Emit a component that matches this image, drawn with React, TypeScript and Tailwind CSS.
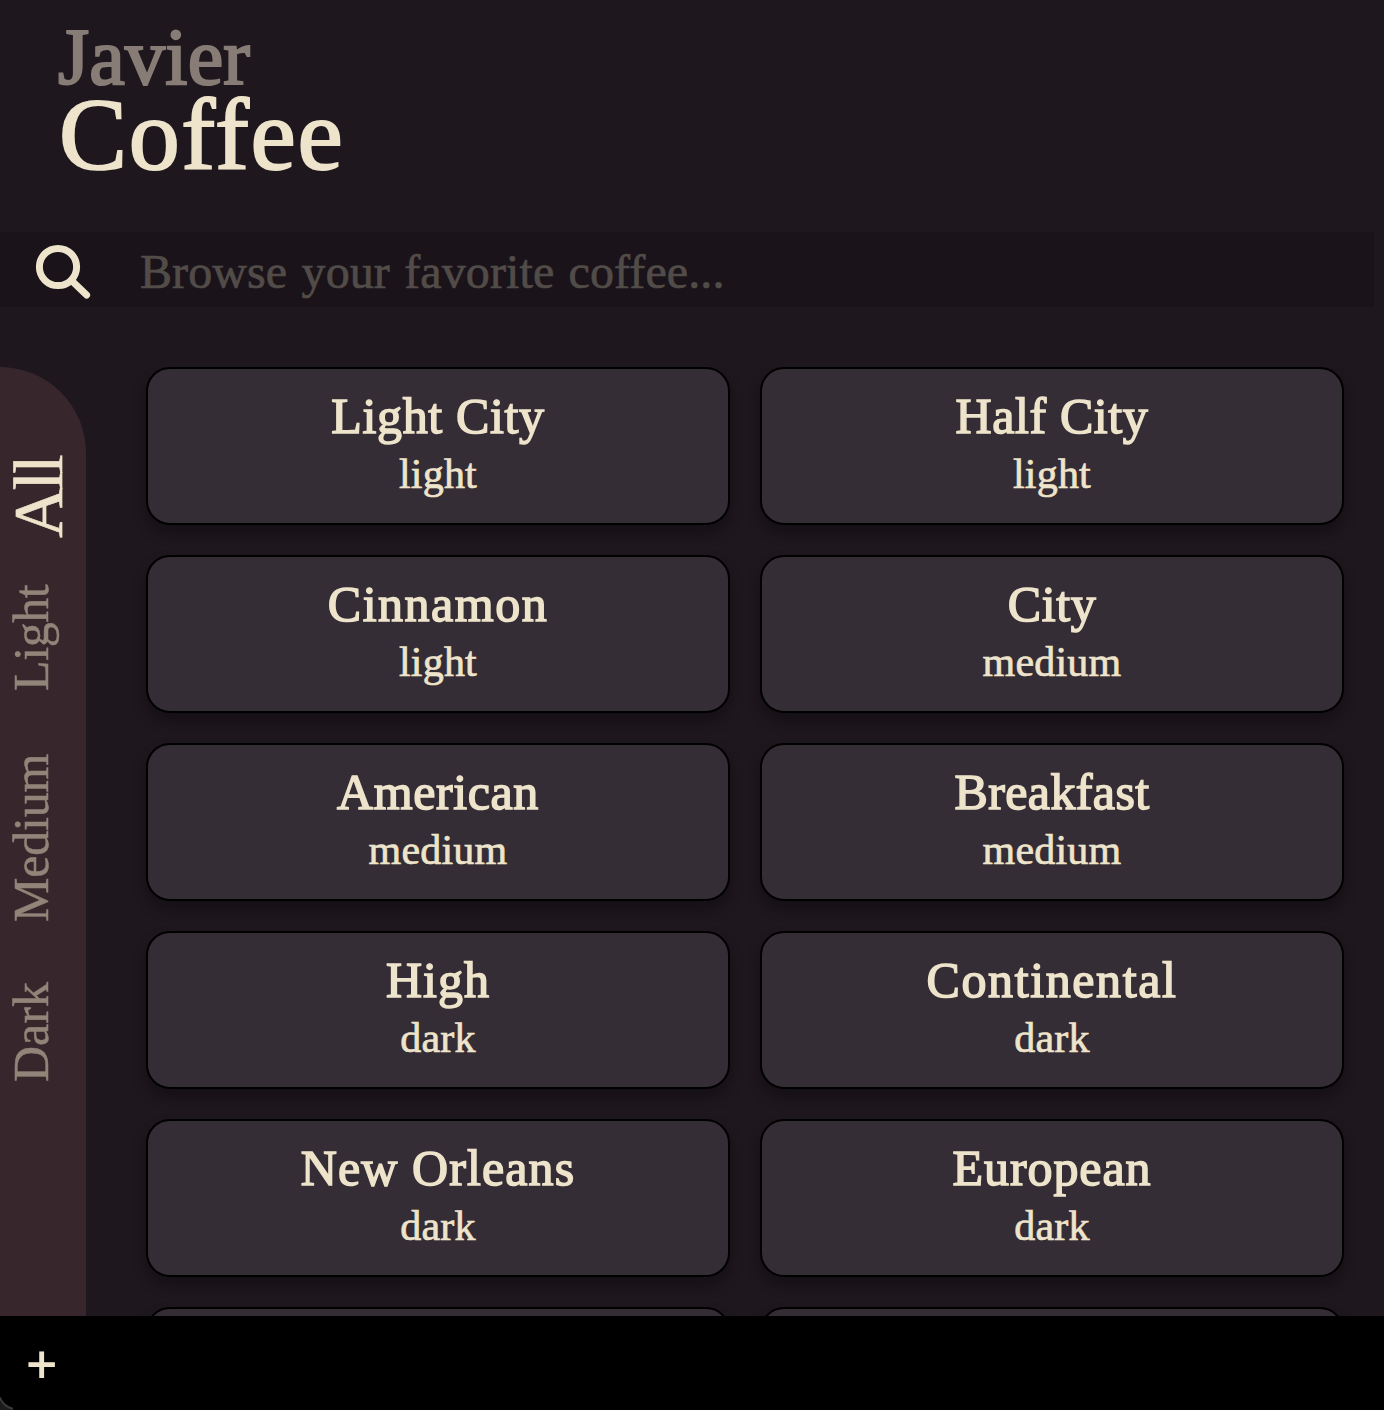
const coffees = [
  { name: 'Light City', roast: 'light', tracking: 'tracking-[0.65px]' },
  { name: 'Half City', roast: 'light', tracking: 'tracking-[0.6px]' },
  { name: 'Cinnamon', roast: 'light', tracking: 'tracking-[1.5px]' },
  { name: 'City', roast: 'medium', tracking: 'tracking-[0.6px]' },
  { name: 'American', roast: 'medium', tracking: 'tracking-[0.6px]' },
  { name: 'Breakfast', roast: 'medium', tracking: 'tracking-[0.4px]' },
  { name: 'High', roast: 'dark', tracking: 'tracking-[1px]' },
  { name: 'Continental', roast: 'dark', tracking: 'tracking-[1.6px]' },
  { name: 'New Orleans', roast: 'dark', tracking: 'tracking-[1.1px]' },
  { name: 'European', roast: 'dark', tracking: 'tracking-[0.9px]' },
  { name: '', roast: '', tracking: '' },
  { name: '', roast: '', tracking: '' },
];

const filters = [
  { label: 'All', style: 'h-[81px] w-[77px] text-[70px] leading-[77px] tracking-[-2.9px] text-[#eee4cb] [-webkit-text-stroke:0.6px_#eee4cb]' },
  { label: 'Light', style: 'mt-[47px] h-[106px] w-[62px] text-[50px] leading-[62px] tracking-[-0.4px] text-[#918478] [-webkit-text-stroke:0.5px_#918478]' },
  { label: 'Medium', style: 'mt-[63px] h-[168px] w-[62px] text-[50px] leading-[62px] tracking-[-0.2px] text-[#918478] [-webkit-text-stroke:0.5px_#918478]' },
  { label: 'Dark', style: 'mt-[59px] h-[101px] w-[62px] text-[50px] leading-[62px] text-[#918478] [-webkit-text-stroke:0.5px_#918478]' },
];

function SearchIcon() {
  return (
    <svg className="ml-[34px] size-[58px] shrink-0" viewBox="0 0 58 58" fill="none" stroke="#eee4cb" strokeLinecap="round">
      <circle cx="24" cy="26" r="18.6" strokeWidth="7" />
      <path d="M38 40 L52.6 54" strokeWidth="7" />
    </svg>
  );
}

export default function App() {
  return (
    <div className="flex h-[1410px] w-[1384px] flex-col overflow-hidden bg-[#1e171e] font-['Liberation_Serif',serif] text-[#eee4cb]">
      <header className="flex h-[232px] shrink-0 flex-col pl-[58px]">
        <span className="mt-[11px] h-[80px] text-[80px] leading-[92px] tracking-[0.2px] text-[#877d76] [-webkit-text-stroke:2.2px_#877d76]">Javier</span>
        <span className="h-[100px] pl-px text-[102px] leading-[87px] tracking-[1.6px] [-webkit-text-stroke:2px_#eee4cb]">Coffee</span>
      </header>

      <label className="flex h-[75px] w-[1374px] shrink-0 items-center bg-[#1a131a]">
        <SearchIcon />
        <input
          className="ml-[48px] h-[75px] w-[1100px] bg-transparent pt-[3px] text-[48px] tracking-[0.1px] outline-none [word-spacing:2.2px] [-webkit-text-stroke:0.7px_#524c49] placeholder:text-[#524c49] placeholder:opacity-100"
          placeholder="Browse your favorite coffee..."
        />
      </label>

      <main className="mt-[60px] flex h-[949px] shrink-0 overflow-hidden">
        <nav className="flex w-[86px] shrink-0 flex-col items-start rounded-tr-[86px] bg-[#37262b] pt-[90px]">
          {filters.map((f) => (
            <button key={f.label} className={`${f.style} shrink-0 rotate-180 whitespace-nowrap text-left [writing-mode:vertical-rl]`}>
              {f.label}
            </button>
          ))}
        </nav>
        <section className="ml-[60px] grid w-[1198px] grid-cols-2 content-start gap-[30px]">
          {coffees.map((c, i) => (
            <article
              key={i}
              className="flex h-[158px] flex-col items-center rounded-3xl border-2 border-black bg-[#352d35] pt-[19px] shadow-[0_8px_14px_rgba(0,0,0,0.3)]"
            >
              <h2 className={`${c.tracking} h-[57px] text-[50px] leading-[57px] [-webkit-text-stroke:1.5px_#eee4cb]`}>{c.name}</h2>
              <p className="text-[42px] leading-[58px] tracking-[0.2px] [-webkit-text-stroke:0.7px_#eee4cb]">{c.roast}</p>
            </article>
          ))}
        </section>
      </main>

      <footer className="relative flex h-[94px] shrink-0 items-center bg-black pl-[27px] pt-[3px]">
        <button className="text-[52px] leading-[94px] [-webkit-text-stroke:2.2px_#eee4cb]">+</button>
        <div className="absolute bottom-0 left-0 size-[13px] overflow-hidden">
          <div className="size-[36px] -translate-x-[2px] -translate-y-[23px] rounded-full border-2 border-[#3a3a3a] shadow-[0_0_0_8px_#1c1c1c]" />
        </div>
      </footer>
    </div>
  );
}
